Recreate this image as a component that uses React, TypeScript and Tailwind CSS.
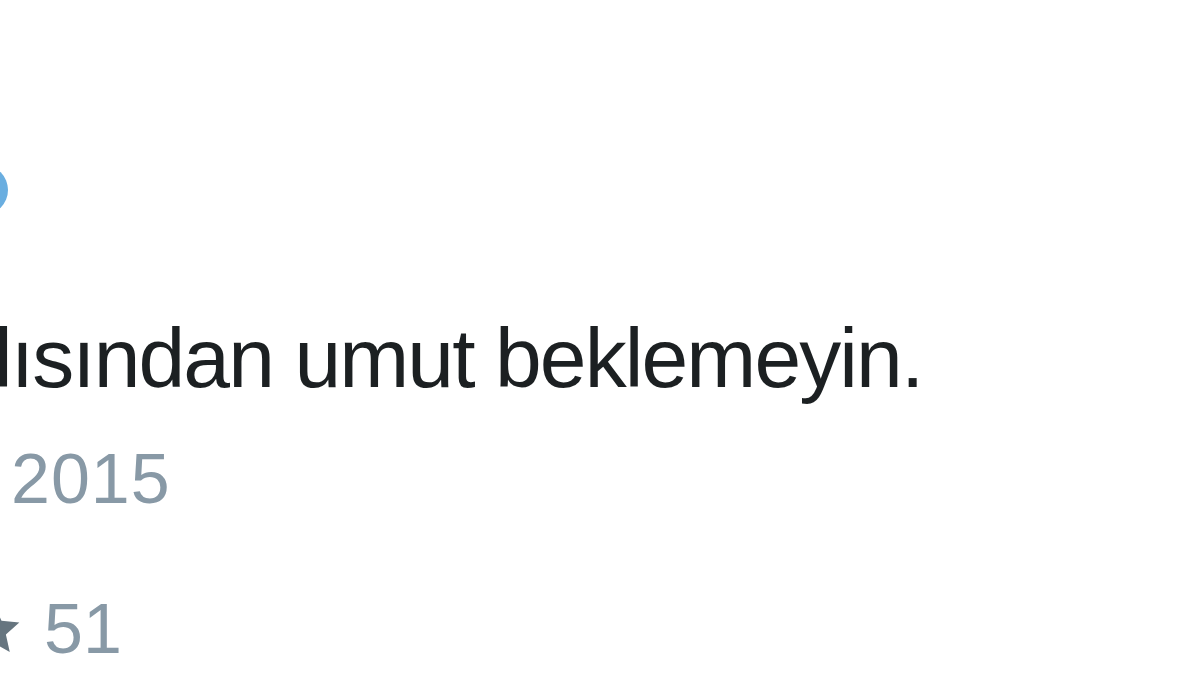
export default function App() {
  return (
    <div className="w-[1200px] h-[675px] overflow-hidden bg-white font-['Liberation_Sans',Arial,sans-serif]">
      <div className="flex flex-col">
        {/* verified badge edge */}
        <div className="mt-[165px] -ml-[42px] w-[50px] h-[50px] rounded-full bg-[#6aaee0]" />

        {/* tweet text */}
        <p className="mt-[101px] -ml-[6px] text-[84px] leading-none tracking-[-1.9px] text-[#1c2022] whitespace-nowrap">
          lısından umut beklemeyin.
        </p>

        {/* date */}
        <div className="mt-[44px] ml-[11px] text-[70px] leading-none tracking-[1px] text-[#8899a6] whitespace-nowrap">
          2015
        </div>

        {/* favorites */}
        <div className="mt-[80px] -ml-[38px] flex items-center gap-[18px] text-[70px] leading-none text-[#8899a6] whitespace-nowrap">
          <svg width="64" height="62" viewBox="0 0 24 24" className="shrink-0">
            <path
              fill="#66757f"
              d="M12 2.5l2.9 6.3 6.9.7-5.2 4.6 1.5 6.8L12 17.4l-6.1 3.5 1.5-6.8-5.2-4.6 6.9-.7z"
            />
          </svg>
          <span>51</span>
        </div>
      </div>
    </div>
  );
}
